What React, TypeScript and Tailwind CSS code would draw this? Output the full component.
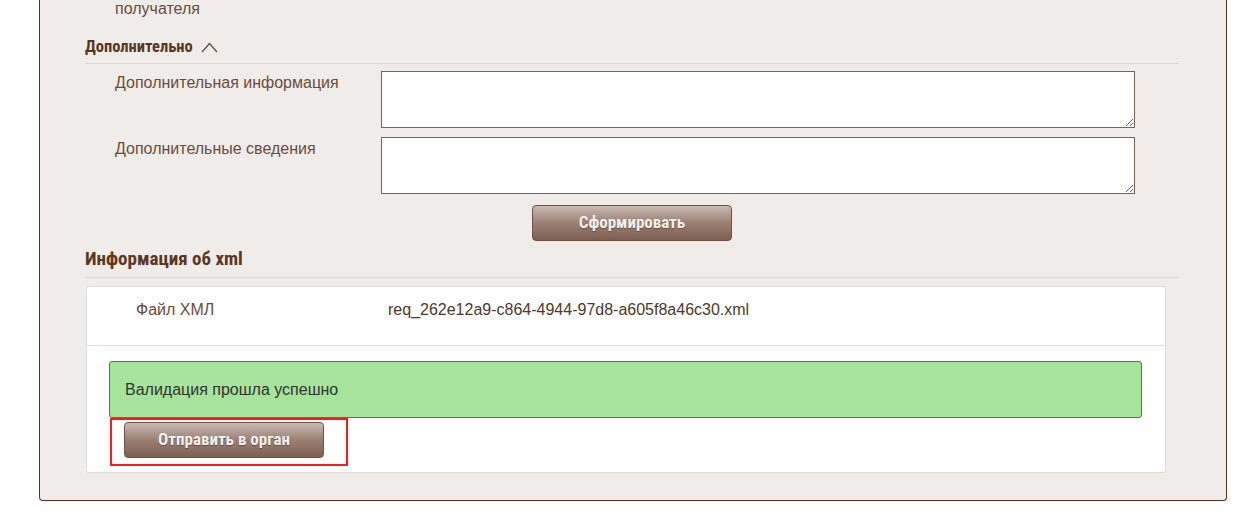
import React from "react";

const narrow = "font-['Roboto_Condensed','Liberation_Sans_Narrow','DejaVu_Sans_Condensed',sans-serif]";
const body = "font-['Liberation_Sans',Arial,sans-serif]";

function BrownButton({ children }: { children: React.ReactNode }) {
  return (
    <button
      className={`${narrow} h-[36px] w-[200px] rounded-[4px] border border-[#6e5042] bg-gradient-to-b from-[#c9bab3] via-[#9a8074] to-[#7d5f50] text-[17px] font-bold text-[#f4efec] [text-shadow:0_1px_1px_rgba(0,0,0,0.35)]`}
    >
      {children}
    </button>
  );
}

const fields = ["Дополнительная информация", "Дополнительные сведения"];

export default function App() {
  return (
    <div className={`min-h-[514px] bg-white ${body}`}>
      <div className="ml-[39px] w-[1188px] rounded-b-[4px] border-x border-b border-[#5c2e1a] bg-[#f0ece9] pb-[27px] pl-[45px] pr-[47px]">
        <div className="h-[18px] pl-[30px] text-[16px] leading-[18px] text-[#6b4d3b]">получателя</div>

        <div className={`mt-[19px] flex h-[27px] items-start gap-2 border-b border-[#dcd6d2] ${narrow} text-[16.5px] font-bold leading-[20px] text-[#5a3722]`}>
          <span>Дополнительно</span>
          <svg width="17" height="12" viewBox="0 0 17 12" className="mt-[4px]">
            <polyline points="1,11 8.5,2.5 16,11" fill="none" stroke="#6b4d3b" strokeWidth="1.3" />
          </svg>
        </div>

        <div className="mt-[7px] flex flex-col gap-[9px] pl-[30px] pr-[44px]">
          {fields.map((f) => (
            <div key={f} className="flex">
              <div className="w-[266px] pt-[3px] text-[16px] leading-[18px] text-[#6b4d3b]">{f}</div>
              <textarea className="block h-[57px] flex-1 border border-[#7f6053] bg-white outline-none" />
            </div>
          ))}
        </div>

        <div className="mt-[11px] flex justify-center">
          <BrownButton>Сформировать</BrownButton>
        </div>

        <div className={`mt-[6px] h-[31px] border-b border-[#dcd6d2] pt-[1px] ${narrow} text-[19px] font-bold leading-[22px] text-[#5a3722]`}>
          Информация об xml
        </div>

        <div className="ml-[1px] mr-[13px] mt-[8px] rounded-[3px] border border-[#dddddd] bg-white">
          <div className="flex h-[59px] border-b border-[#dddddd] pt-[14px] text-[16px] leading-[18px]">
            <div className="w-[301px] pl-[49px] text-[#6b4d3b]">Файл ХМЛ</div>
            <div className="text-[#4a3a2c]">req_262e12a9-c864-4944-97d8-a605f8a46c30.xml</div>
          </div>
          <div className="px-[22px] pb-[6px] pt-[15px]">
            <div className="mr-[1px] flex h-[57px] items-center rounded-[3px] border border-[#7a6254] bg-[#a6e39b] pl-[15px] text-[16px] text-[#333333]">
              Валидация прошла успешно
            </div>
            <div className="ml-[1px] w-[238px] border-2 border-[#ff1a1a] pb-[6px] pl-[12px] pt-[2px]">
              <BrownButton>Отправить в орган</BrownButton>
            </div>
          </div>
        </div>
      </div>
    </div>
  );
}
